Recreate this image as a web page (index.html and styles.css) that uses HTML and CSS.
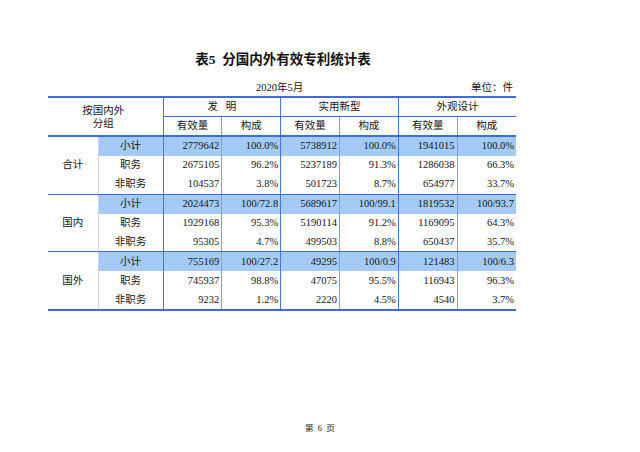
FILE: index.html
```html
<!DOCTYPE html>
<html lang="zh-CN">
<head>
<meta charset="utf-8">
<link rel="stylesheet" href="styles.css">
</head>
<body>
<div class="page">
  <h1 class="title">表5&nbsp; 分国内外有效专利统计表</h1>
  <div class="meta">
    <span class="date">2020年5月</span>
    <span class="unit">单位：件</span>
  </div>
  <table class="stats">
    <colgroup>
      <col class="c-grp"><col class="c-sub">
      <col class="c-n"><col class="c-n"><col class="c-n"><col class="c-n"><col class="c-n"><col class="c-n">
    </colgroup>
    <thead>
      <tr class="h1">
        <th colspan="2" rowspan="2" class="corner">按国内外<br>分组</th>
        <th colspan="2" class="major">发&ensp;&nbsp;明</th>
        <th colspan="2" class="major">实用新型</th>
        <th colspan="2" class="major last">外观设计</th>
      </tr>
      <tr class="h2">
        <th class="major">有效量</th><th class="minor">构成</th>
        <th class="major">有效量</th><th class="minor">构成</th>
        <th class="major">有效量</th><th class="minor last">构成</th>
      </tr>
    </thead>
    <tbody>
      <tr class="sum">
        <td rowspan="3" class="grp">合计</td>
        <td class="sub">小计</td>
        <td class="major">2779642</td><td class="minor">100.0%</td>
        <td class="major">5738912</td><td class="minor">100.0%</td>
        <td class="major">1941015</td><td class="minor last">100.0%</td>
      </tr>
      <tr>
        <td class="sub">职务</td>
        <td class="major">2675105</td><td class="minor">96.2%</td>
        <td class="major">5237189</td><td class="minor">91.3%</td>
        <td class="major">1286038</td><td class="minor last">66.3%</td>
      </tr>
      <tr class="end">
        <td class="sub">非职务</td>
        <td class="major">104537</td><td class="minor">3.8%</td>
        <td class="major">501723</td><td class="minor">8.7%</td>
        <td class="major">654977</td><td class="minor last">33.7%</td>
      </tr>
      <tr class="sum">
        <td rowspan="3" class="grp">国内</td>
        <td class="sub">小计</td>
        <td class="major">2024473</td><td class="minor">100/72.8</td>
        <td class="major">5689617</td><td class="minor">100/99.1</td>
        <td class="major">1819532</td><td class="minor last">100/93.7</td>
      </tr>
      <tr>
        <td class="sub">职务</td>
        <td class="major">1929168</td><td class="minor">95.3%</td>
        <td class="major">5190114</td><td class="minor">91.2%</td>
        <td class="major">1169095</td><td class="minor last">64.3%</td>
      </tr>
      <tr class="end">
        <td class="sub">非职务</td>
        <td class="major">95305</td><td class="minor">4.7%</td>
        <td class="major">499503</td><td class="minor">8.8%</td>
        <td class="major">650437</td><td class="minor last">35.7%</td>
      </tr>
      <tr class="sum">
        <td rowspan="3" class="grp">国外</td>
        <td class="sub">小计</td>
        <td class="major">755169</td><td class="minor">100/27.2</td>
        <td class="major">49295</td><td class="minor">100/0.9</td>
        <td class="major">121483</td><td class="minor last">100/6.3</td>
      </tr>
      <tr>
        <td class="sub">职务</td>
        <td class="major">745937</td><td class="minor">98.8%</td>
        <td class="major">47075</td><td class="minor">95.5%</td>
        <td class="major">116943</td><td class="minor last">96.3%</td>
      </tr>
      <tr class="end final">
        <td class="sub">非职务</td>
        <td class="major">9232</td><td class="minor">1.2%</td>
        <td class="major">2220</td><td class="minor">4.5%</td>
        <td class="major">4540</td><td class="minor last">3.7%</td>
      </tr>
    </tbody>
  </table>
  <div class="footer">第&nbsp; 6&nbsp; 页</div>
</div>
</body>
</html>
```

FILE: styles.css
```css
html, body {
  margin: 0;
  padding: 0;
  background: #ffffff;
}

body {
  font-family: "Liberation Serif", "Noto Sans CJK SC", serif;
  color: #151515;
}

.page {
  width: 640px;
  height: 452px;
  box-sizing: border-box;
  padding-top: 50px;
  overflow: hidden;
}

.title {
  margin: 0 0 0 48px;
  width: 468px;
  text-align: center;
  font-size: 13.5px;
  line-height: 20px;
  font-weight: bold;
  color: #111;
  padding-left: 2px;
  box-sizing: border-box;
}

.meta {
  margin: 11px 0 0 48px;
  width: 468px;
  display: flex;
  justify-content: space-between;
  font-size: 10.5px;
  line-height: 14px;
}

.date {
  padding-left: 208px;
}

.unit {
  padding-right: 3px;
}

.stats {
  margin: 1px 0 0 48px;
  width: 468px;
  border-collapse: collapse;
  table-layout: fixed;
  font-size: 10.5px;
}

.c-grp { width: 50px; }
.c-sub { width: 65px; }
.c-n { width: 58.8px; }

.stats th,
.stats td {
  padding: 0 2px;
  height: 18px;
  line-height: 18px;
  font-weight: normal;
  white-space: nowrap;
}

.stats thead tr.h1 th {
  border-top: 2px solid #3d6ce0;
  height: 18px;
}

.stats thead tr.h1 th.major {
  border-bottom: 1px solid #3d6ce0;
}

.stats thead tr.h2 th {
  border-bottom: 2px solid #3d6ce0;
  height: 18px;
}

.stats th.corner {
  line-height: 13px;
  padding-right: 6px;
  border-bottom: 2px solid #3d6ce0;
}

.stats th {
  text-align: center;
}

.stats .major {
  border-left: 1px solid #4a76e2;
}

.stats .minor {
  border-left: 1px solid #7f9ee8;
}

.stats td.major,
.stats td.minor {
  text-align: right;
  padding-right: 2px;
}

.stats td.sub {
  text-align: center;
  border-left: 1px solid #c9d6f3;
}

.stats td.grp {
  text-align: center;
  vertical-align: middle;
  background: #ffffff;
}

.stats tbody tr td {
  height: 18.9px;
  line-height: 18px;
}

.stats tr.sum td:not(.grp) {
  background: #a3cbf6;
}

.stats tbody tr:nth-child(6) td,
.stats tbody tr:nth-child(3) td {
  border-bottom: 1.5px solid #3d6ce0;
}

.stats tbody td.grp {
  border-bottom: 1.5px solid #3d6ce0;
}

.stats tbody tr.final td,
.stats tbody tr:nth-child(7) td.grp {
  border-bottom: 2px solid #3d6ce0;
}

.footer {
  margin-top: 111px;
  text-align: center;
  font-size: 8.5px;
  line-height: 12px;
  padding-left: 0;
}
```
